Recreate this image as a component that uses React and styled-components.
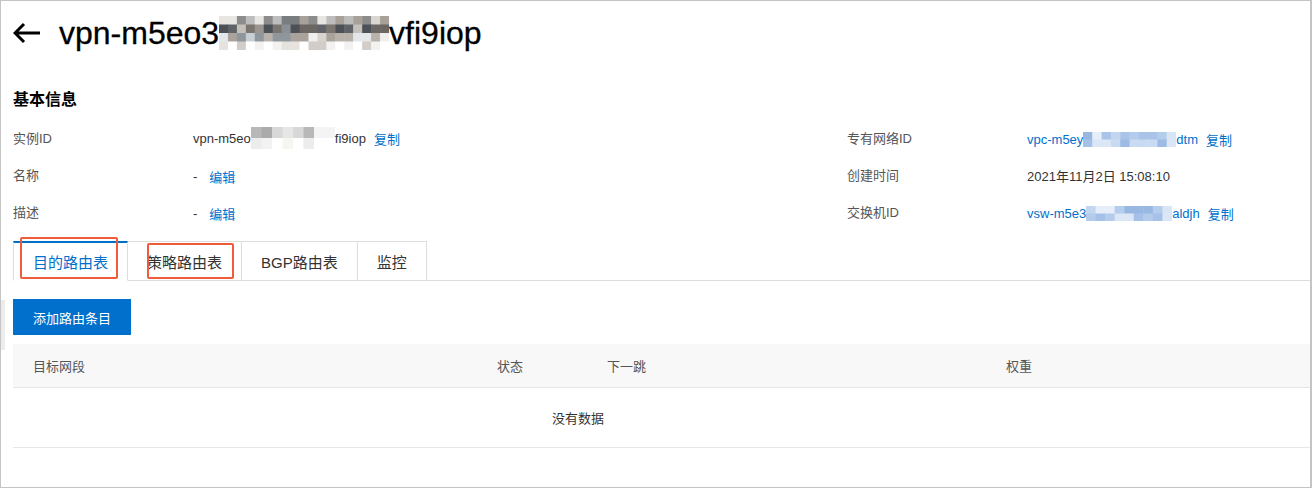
import React from 'react';
import styled, { createGlobalStyle } from 'styled-components';

const GlobalStyle = createGlobalStyle`
  html, body {
    margin: 0;
    padding: 0;
    background: #fff;
  }
  body {
    font-family: "Liberation Sans", "Noto Sans CJK SC", Arial, sans-serif;
    color: #333;
  }
  * {
    box-sizing: border-box;
  }
`;

const Frame = styled.div`
  position: relative;
  width: 1312px;
  height: 488px;
  border: 1px solid #c4c4c4;
  border-right-width: 2px;
  overflow: hidden;
  padding-left: 12px;
`;

const ScrollHint = styled.div`
  position: absolute;
  left: 0;
  top: 299px;
  width: 4px;
  height: 50px;
  background: #ececec;
`;

const Header = styled.div`
  display: flex;
  align-items: center;
  gap: 18px;
  height: 64px;
`;

const BackButton = styled.button`
  display: flex;
  align-items: center;
  border: none;
  background: none;
  padding: 0;
  cursor: pointer;
`;

const PageTitle = styled.h1`
  margin: 0;
  font-size: 32px;
  font-weight: 400;
  color: #000;
  display: flex;
  align-items: center;
  line-height: 40px;
  -webkit-text-stroke: 0.3px #000;
`;

const SectionTitle = styled.h2`
  margin: 23px 0 0;
  font-size: 16px;
  font-weight: 700;
  line-height: 24px;
  color: #000;
`;

const InfoGrid = styled.div`
  display: grid;
  grid-template-columns: 180px 654px 180px 1fr;
  grid-auto-rows: 37px;
  align-items: center;
  margin-top: 7px;
  font-size: 13px;
`;

const Label = styled.div`
  color: #555;
`;

const Value = styled.div`
  display: flex;
  align-items: center;
  color: ${p => (p.$link ? '#0070cc' : '#333')};
  padding-top: ${p => (p.$low ? '3px' : '1px')};
  white-space: nowrap;
`;

const Dash = styled.span`
  margin-right: 12px;
`;

const Action = styled.a`
  color: #0070cc;
  text-decoration: none;
  margin-left: ${p => p.$gap || '8px'};
  cursor: pointer;
`;

const TabBar = styled.div`
  position: relative;
  display: flex;
  margin-top: 11px;
  border-bottom: 1px solid #ddd;
  height: 40px;
`;

const Tab = styled.div`
  display: flex;
  align-items: center;
  padding: 0 19px;
  font-size: 15px;
  color: ${p => (p.$active ? '#0070cc' : '#333')};
  background: #fff;
  border: 1px solid #ddd;
  border-left-width: ${p => (p.$first ? '1px' : '0')};
  border-top: ${p => (p.$active ? '2px solid #0070cc' : '1px solid #ddd')};
  border-bottom: ${p => (p.$active ? '1px solid #fff' : 'none')};
  height: ${p => (p.$active ? '40px' : '39px')};
  cursor: pointer;
`;

const Mark = styled.div`
  position: absolute;
  border: 2px solid #ef5b3b;
  border-radius: 2px;
  pointer-events: none;
  left: ${p => p.$left}px;
  top: ${p => p.$top}px;
  width: ${p => p.$width}px;
  height: ${p => p.$height}px;
`;

const Toolbar = styled.div`
  margin-top: 18px;
`;

const PrimaryButton = styled.button`
  height: 36px;
  padding: 0 20px;
  border: none;
  background: #0070cc;
  color: #fff;
  font-family: inherit;
  font-size: 13px;
  cursor: pointer;
`;

const Table = styled.div`
  margin-top: 9px;
  font-size: 13px;
`;

const HeadRow = styled.div`
  display: grid;
  grid-template-columns: 464px 110px 399px 1fr;
  height: 44px;
  align-items: center;
  background: #f8f8f8;
  border-bottom: 1px solid #e6e6e6;
  color: #555;
`;

const HeadCell = styled.div`
  padding-left: 20px;
`;

const EmptyRow = styled.div`
  height: 60px;
  display: flex;
  align-items: center;
  padding-left: 539px;
  border-bottom: 1px solid #e6e6e6;
  color: #333;
`;

const MosaicSvg = styled.svg`
  display: block;
  flex-shrink: 0;
`;

// pixelated redaction block; one palette per row
function Mosaic({ width, height, cols, rows, palettes, seed }) {
  let s = seed;
  const rand = () => {
    s = (s * 9301 + 49297) % 233280;
    return s / 233280;
  };
  const cw = width / cols;
  const rh = height / rows;
  const cells = [];
  for (let r = 0; r < rows; r++) {
    const palette = palettes[r % palettes.length];
    for (let c = 0; c < cols; c++) {
      const color = palette[Math.floor(rand() * palette.length)];
      cells.push(
        <rect key={`${r}-${c}`} x={c * cw} y={r * rh} width={cw + 0.5} height={rh + 0.5} fill={color} />
      );
    }
  }
  return (
    <MosaicSvg width={width} height={height} viewBox={`0 0 ${width} ${height}`}>
      {cells}
    </MosaicSvg>
  );
}

const titleRows = [
  ['#8c8c8c', '#a7a19a', '#bdbdbd', '#7a7d80', '#d9d6d2', '#e8e6e3'],
  ['#5f6367', '#7b7570', '#4c5057', '#8a9096', '#6b6661', '#9b958f', '#c5c0ba'],
  ['#d8d3cd', '#a9a39c', '#8f969c', '#c9ced4', '#f1efec', '#b8b2ab', '#e3e7ea'],
  ['#ffffff', '#ffffff', '#f4f2f0', '#ffffff', '#e6e3df', '#ffffff', '#d2cdc8'],
];
const grayRows = [
  ['#f4f4f4', '#c9c9c9', '#b8b8b8', '#d8d8d8', '#e6e6e6', '#ababab'],
  ['#ffffff', '#e9e9e9', '#f2f2f2', '#ffffff', '#f7f5f0', '#ececec'],
];
const blueRows = [
  ['#c2d6f0', '#a9c4e8', '#d8e5f5', '#98b8e2', '#b5cdec', '#e6eef9'],
  ['#b4cbeb', '#9dbbe4', '#c9dbf2', '#a5c1e8', '#dbe7f7'],
];

const ArrowIcon = () => (
  <svg width="28" height="22" viewBox="0 0 28 22">
    <path d="M27 11H2.5M11 2L2 11l9 9" fill="none" stroke="#000" strokeWidth="3" strokeLinejoin="miter" />
  </svg>
);

export default function App() {
  return (
    <>
      <GlobalStyle />
      <Frame>
        <ScrollHint />
        <Header>
          <BackButton>
            <ArrowIcon />
          </BackButton>
          <PageTitle>
            vpn-m5eo3
            <Mosaic width={170} height={34} cols={19} rows={4} palettes={titleRows} seed={17} />
            vfi9iop
          </PageTitle>
        </Header>

        <SectionTitle>基本信息</SectionTitle>
        <InfoGrid>
          <Label>实例ID</Label>
          <Value>
            vpn-m5eo
            <Mosaic width={84} height={22} cols={8} rows={2} palettes={grayRows} seed={5} />
            fi9iop
            <Action $gap="8px">复制</Action>
          </Value>
          <Label>专有网络ID</Label>
          <Value $link $low>
            vpc-m5ey
            <Mosaic width={93} height={15} cols={10} rows={2} palettes={blueRows} seed={11} />
            dtm
            <Action>复制</Action>
          </Value>

          <Label>名称</Label>
          <Value $low>
            <Dash>-</Dash>
            <Action $gap="0">编辑</Action>
          </Value>
          <Label>创建时间</Label>
          <Value>2021年11月2日 15:08:10</Value>

          <Label>描述</Label>
          <Value $low>
            <Dash>-</Dash>
            <Action $gap="0">编辑</Action>
          </Value>
          <Label>交换机ID</Label>
          <Value $link $low>
            vsw-m5e3
            <Mosaic width={86} height={15} cols={9} rows={2} palettes={blueRows} seed={23} />
            aldjh
            <Action>复制</Action>
          </Value>
        </InfoGrid>

        <TabBar>
          <Tab $active $first>目的路由表</Tab>
          <Tab>策略路由表</Tab>
          <Tab>BGP路由表</Tab>
          <Tab>监控</Tab>
          <Mark $left={7} $top={-4} $width={98} $height={42} />
          <Mark $left={134} $top={2} $width={87} $height={36} />
        </TabBar>

        <Toolbar>
          <PrimaryButton>添加路由条目</PrimaryButton>
        </Toolbar>

        <Table>
          <HeadRow>
            <HeadCell>目标网段</HeadCell>
            <HeadCell>状态</HeadCell>
            <HeadCell>下一跳</HeadCell>
            <HeadCell>权重</HeadCell>
          </HeadRow>
          <EmptyRow>没有数据</EmptyRow>
        </Table>
      </Frame>
    </>
  );
}
